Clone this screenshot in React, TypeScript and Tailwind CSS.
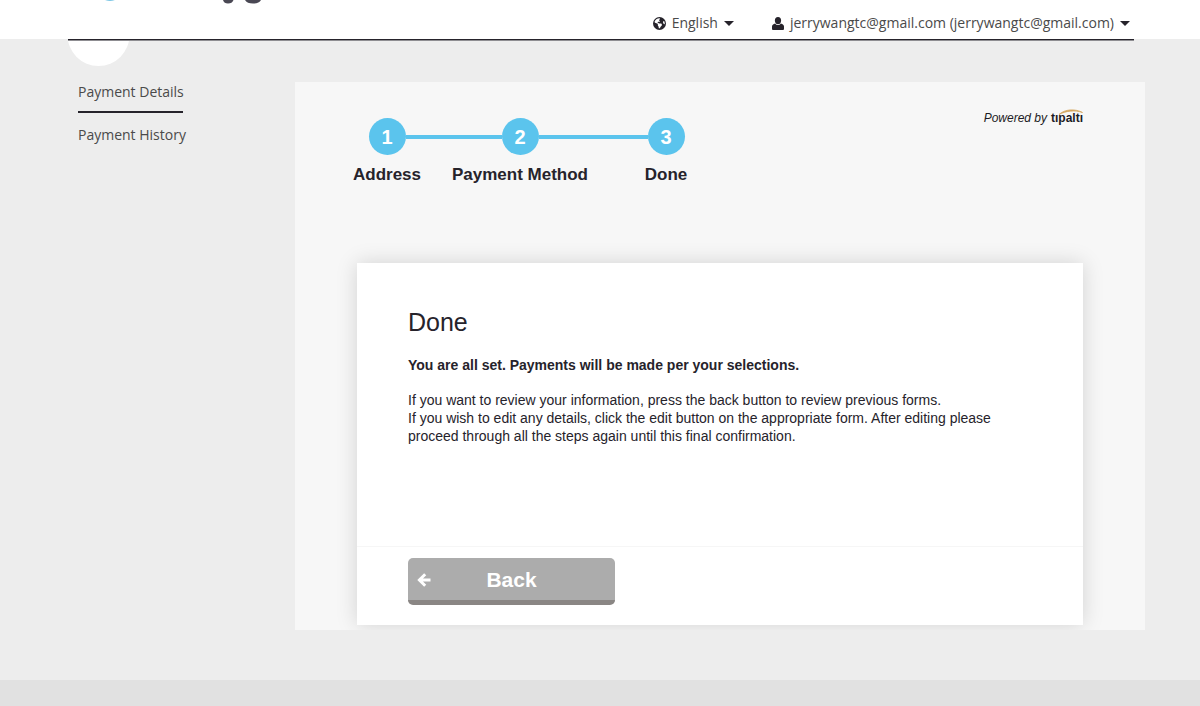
import React from "react";
import { FaEarthAmericas } from "react-icons/fa6";

const steps = [
  { n: 1, label: "Address", width: "w-[100px]" },
  { n: 2, label: "Payment Method", width: "w-[166px]" },
  { n: 3, label: "Done", width: "w-[126px]" },
];

function Caret() {
  return (
    <svg viewBox="0 0 10 5" className="h-[5px] w-[10px] fill-[#26232b]" aria-hidden="true">
      <path d="M0 0h10L5 5z" />
    </svg>
  );
}

function UserIcon() {
  return (
    <svg viewBox="0 0 12 13" className="h-[13px] w-[12px] fill-[#26232b]" aria-hidden="true">
      <ellipse cx="6" cy="3.600" rx="3.100" ry="3.600" />
      <path d="M3.200 6.600C1.200 7.200 0 8 0 9.600v2.200C0 12.600.5 13 1.300 13h9.400c.8 0 1.300-.4 1.300-1.200V9.600c0-1.600-1.200-2.400-3.200-3C8 7.600 7.100 8.100 6 8.100S4 7.600 3.200 6.600z" />
    </svg>
  );
}

function BackArrow() {
  return (
    <svg viewBox="0 0 14 14" className="ml-[9px] size-[14px]" fill="none" stroke="#fff" strokeWidth="3" aria-hidden="true">
      <path d="M13.500 7H3M8.200 1.200L2.400 7l5.800 5.800" />
    </svg>
  );
}

function Logo() {
  return (
    <svg viewBox="0 0 200 5" className="h-[5px] w-[200px]" aria-hidden="true">
      <ellipse cx="42" cy="-3" rx="8" ry="3.800" fill="#4fb3dc" />
      <path d="M155 0q1 3.500 5 3.500 4.200 0 5.500-3.500z" fill="#4a4854" />
      <path d="M177 0q2 3.500 8 3.500T193 0z" fill="#4a4854" />
    </svg>
  );
}

function Header() {
  return (
    <header className="bg-white pr-[66px] pl-[68px]">
      <div className="flex h-[39px] items-start justify-between">
        <Logo />
        <div className="flex gap-[38px] pt-[13px] text-[14px] leading-5 text-[#4a4a4a]">
          <button type="button" className="flex items-center gap-[6px]">
            <FaEarthAmericas className="size-[13px] text-[#26232b]" />
            <span>English</span>
            <Caret />
          </button>
          <button type="button" className="flex items-center gap-[6px] pr-1">
            <UserIcon />
            <span>jerrywangtc@gmail.com (jerrywangtc@gmail.com)</span>
            <Caret />
          </button>
        </div>
      </div>
    </header>
  );
}

function Sidebar() {
  return (
    <aside className="w-[227px] shrink-0">
      <svg viewBox="0 0 61 25" className="block h-[25px] w-[61px]" aria-hidden="true">
        <circle cx="30.5" cy="-6" r="31" fill="#fff" />
      </svg>
      <nav className="ml-[10px] flex w-[105px] flex-col pt-4 text-[14px] leading-5 whitespace-nowrap text-[#4a4a4a]">
        <a href="#details" className="border-b-2 border-[#26232b] pb-[9px]">
          Payment Details
        </a>
        <a href="#history" className="pt-3">
          Payment History
        </a>
      </nav>
    </aside>
  );
}

function Steps() {
  return (
    <ol className="flex">
      {steps.map((s, i) => (
        <li key={s.n} className={`${s.width} flex flex-col items-center`}>
          <div className="flex w-full items-center">
            <span className={`h-1 flex-1 ${i === 0 ? "" : "bg-[#5bc4ed]"}`} />
            <span className="flex size-[37px] items-center justify-center rounded-full bg-[#5bc4ed] text-[20px] font-bold text-white">
              {s.n}
            </span>
            <span className={`h-1 flex-1 ${i === steps.length - 1 ? "" : "bg-[#5bc4ed]"}`} />
          </div>
          <span className="mt-2 text-[17px] leading-6 font-bold whitespace-nowrap">{s.label}</span>
        </li>
      ))}
    </ol>
  );
}

function PoweredBy() {
  return (
    <p className="flex items-baseline gap-1 pt-[28px] text-[12px] leading-4 text-[#1c1b24]">
      <em>Powered by</em>
      <span className="relative font-bold">
        tıpaltı
        <svg viewBox="0 0 26 6" className="absolute -top-[1px] right-0 h-[6px] w-[26px]" aria-hidden="true">
          <path d="M2 5.500C8 0 18-.5 25.500 3.500 18 .8 9 1.800 2 5.500z" fill="#d3a55c" stroke="#d3a55c" strokeWidth="0.8" />
        </svg>
      </span>
    </p>
  );
}

export default function App() {
  return (
    <div className="flex min-h-screen flex-col bg-[#ededed] font-['Open_Sans','Noto_Sans',sans-serif]">
      <Header />
      <div className="mr-[66px] ml-[68px] h-[2px] border-b border-[#8f8e92] bg-[#26232b]" />
      <div className="flex pr-[55px] pb-[50px] pl-[68px]">
        <Sidebar />
        <main className="mt-[41px] min-w-0 flex-1 overflow-hidden bg-[#f7f7f7] pr-[62px] pb-[5px] pl-[42px] font-['Liberation_Sans',Arial,sans-serif] text-[#26232b]">
          <div className="flex h-[181px] items-start justify-between">
            <div className="pt-[36px]">
              <Steps />
            </div>
            <PoweredBy />
          </div>
          <section className="ml-5 bg-white shadow-[0_0_20px_rgba(0,0,0,0.15)]">
            <div className="h-[284px] border-b border-[#f6f6f6] px-[51px] pt-[43px]">
              <h1 className="text-[25px] leading-8">Done</h1>
              <p className="mt-[18px] text-[14px] leading-[18px] font-bold">
                You are all set. Payments will be made per your selections.
              </p>
              <p className="mt-[17px] text-[14px] leading-[18px]">
                If you want to review your information, press the back button to review previous forms.
                <br />
                If you wish to edit any details, click the edit button on the appropriate form. After editing please
                proceed through all the steps again until this final confirmation.
              </p>
            </div>
            <div className="px-[51px] pt-[11px] pb-5">
              <button
                type="button"
                className="grid h-[47px] w-[207px] grid-cols-[31px_1fr_31px] items-center rounded-[5px] border-b-[5px] border-[#8a8684] bg-[#acacac] pt-[2px] text-[21px] font-bold text-white"
              >
                <BackArrow />
                <span>Back</span>
              </button>
            </div>
          </section>
        </main>
      </div>
      <footer className="flex-1 bg-[#e1e1e1]" />
    </div>
  );
}
